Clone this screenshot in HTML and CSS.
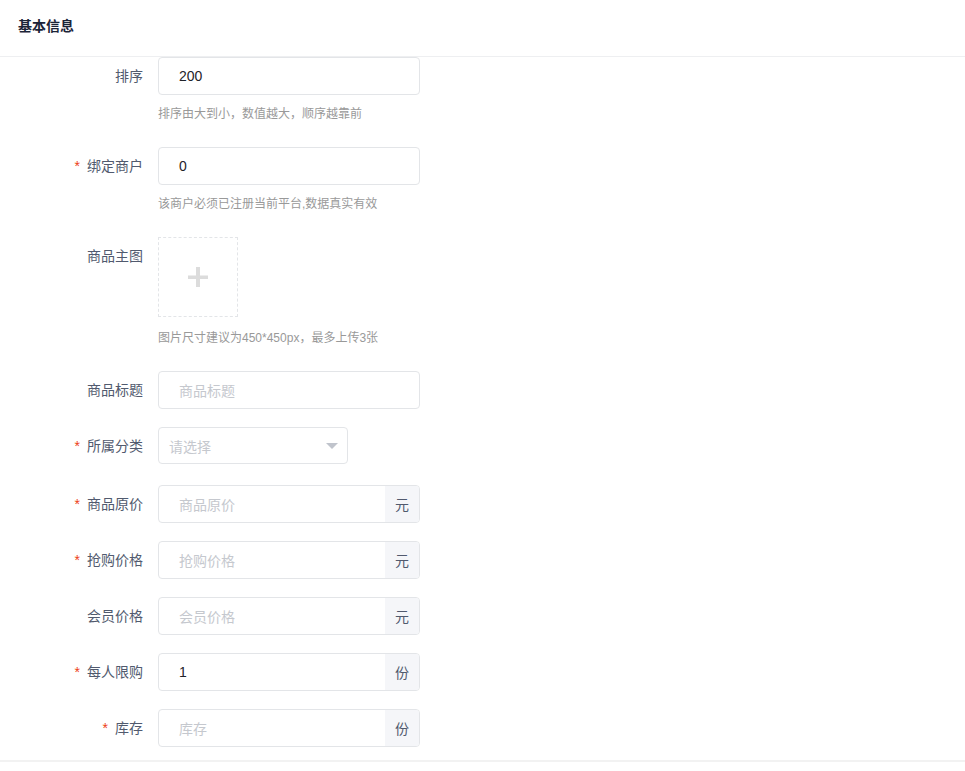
FILE: index.html
```html
<!DOCTYPE html>
<html lang="zh-CN">
<head>
<meta charset="utf-8">
<title>基本信息</title>
<link rel="stylesheet" href="styles.css">
</head>
<body>
<div class="card">
  <div class="card-head">基本信息</div>
  <form class="form">
    <div class="item">
      <label class="label">排序</label>
      <div class="control">
        <div class="input"><span class="value">200</span></div>
        <div class="help">排序由大到小，数值越大，顺序越靠前</div>
      </div>
    </div>
    <div class="item">
      <label class="label"><span class="req">*</span>绑定商户</label>
      <div class="control">
        <div class="input"><span class="value">0</span></div>
        <div class="help">该商户必须已注册当前平台,数据真实有效</div>
      </div>
    </div>
    <div class="item">
      <label class="label">商品主图</label>
      <div class="control">
        <div class="upload-wrap">
          <div class="upload">
            <svg width="20" height="20" viewBox="0 0 20 20"><rect x="8" y="0" width="4" height="20" fill="#dcdcdc"/><rect x="0" y="8.5" width="20" height="3.5" fill="#dcdcdc"/></svg>
          </div>
        </div>
        <div class="help">图片尺寸建议为450*450px，最多上传3张</div>
      </div>
    </div>
    <div class="item">
      <label class="label">商品标题</label>
      <div class="control">
        <div class="input"><span class="ph">商品标题</span></div>
      </div>
    </div>
    <div class="item">
      <label class="label"><span class="req">*</span>所属分类</label>
      <div class="control">
        <div class="select"><span class="ph">请选择</span><span class="arrow"></span></div>
      </div>
    </div>
    <div class="item">
      <label class="label"><span class="req">*</span>商品原价</label>
      <div class="control">
        <div class="input group"><span class="ph">商品原价</span><span class="addon">元</span></div>
      </div>
    </div>
    <div class="item">
      <label class="label"><span class="req">*</span>抢购价格</label>
      <div class="control">
        <div class="input group"><span class="ph">抢购价格</span><span class="addon">元</span></div>
      </div>
    </div>
    <div class="item">
      <label class="label">会员价格</label>
      <div class="control">
        <div class="input group"><span class="ph">会员价格</span><span class="addon">元</span></div>
      </div>
    </div>
    <div class="item">
      <label class="label"><span class="req">*</span>每人限购</label>
      <div class="control">
        <div class="input group"><span class="value">1</span><span class="addon">份</span></div>
      </div>
    </div>
    <div class="item last">
      <label class="label"><span class="req">*</span>库存</label>
      <div class="control">
        <div class="input group"><span class="ph">库存</span><span class="addon">份</span></div>
      </div>
    </div>
  </form>
</div>
</body>
</html>
```

FILE: styles.css
```css
* { box-sizing: border-box; }
html, body { margin: 0; padding: 0; background: #fff; }
body {
  font-family: "Liberation Sans", "Noto Sans CJK SC", sans-serif;
  color: #515a6e;
}
.card {
  background: #fff;
  border-bottom: 2px solid #f2f2f2;
  padding-bottom: 13px;
}
.card-head {
  height: 57px;
  padding: 16px 18px 0;
  font-size: 14px;
  line-height: 20px;
  font-weight: bold;
  color: #1c2438;
  border-bottom: 1px solid #eeeff1;
}
.form { display: flex; flex-direction: column; }
.item {
  display: grid;
  grid-template-columns: 143px 262px;
  column-gap: 15px;
  margin-bottom: 18px;
}
.item.last { margin-bottom: 0; }
.label {
  text-align: right;
  font-size: 14px;
  line-height: 38px;
  color: #515a6e;
  white-space: nowrap;
}
.req {
  color: #ed4014;
  font-family: "Liberation Sans", sans-serif;
  font-size: 14px;
  margin-right: 7px;
}
.control { display: flex; flex-direction: column; }
.input {
  height: 38px;
  border: 1px solid #e3e5e8;
  border-radius: 4px;
  display: flex;
  align-items: center;
  padding-left: 20px;
  font-size: 14px;
  overflow: hidden;
}
.input.group { padding-right: 0; }
.value { color: #1f2329; flex: 1; }
.ph { color: #c5c8ce; flex: 1; }
.addon {
  width: 34px;
  align-self: stretch;
  background: #f5f6f9;
  display: flex;
  align-items: center;
  justify-content: center;
  color: #515a6e;
  font-size: 14px;
}
.help {
  font-size: 12px;
  line-height: 20px;
  color: #999;
  padding-top: 9px;
  padding-bottom: 5px;
}
.upload-wrap { height: 82px; }
.upload {
  width: 80px;
  height: 80px;
  border: 1px dashed #e3e5e8;
  display: flex;
  align-items: center;
  justify-content: center;
}
.select {
  width: 190px;
  height: 37px;
  border: 1px solid #e3e5e8;
  border-radius: 4px;
  display: flex;
  align-items: center;
  padding: 0 9px 0 10px;
  font-size: 14px;
  margin-bottom: 3px;
}
.arrow {
  width: 0;
  height: 0;
  border-left: 6px solid transparent;
  border-right: 6px solid transparent;
  border-top: 6px solid #c0c4cc;
}
```
